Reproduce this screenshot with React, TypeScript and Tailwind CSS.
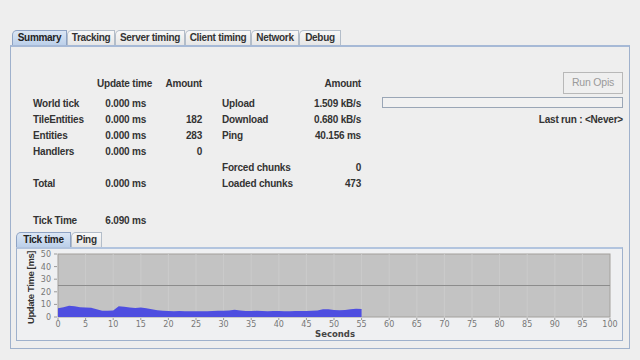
import React from "react";

const FONT = '"Liberation Sans", Arial, sans-serif';

const outerTabs = [
  { label: "Summary", w: "w-[55px]", active: true },
  { label: "Tracking", w: "w-[48px]" },
  { label: "Server timing", w: "w-[70px]" },
  { label: "Client timing", w: "w-[66px]" },
  { label: "Network", w: "w-[48px]" },
  { label: "Debug", w: "w-[42px]" },
];

function Tab({ label, w, active }: { label: string; w: string; active?: boolean }) {
  return (
    <div
      className={`${w} h-[15px] flex items-center justify-center whitespace-nowrap rounded-tl-[5px] border border-b-0 text-[10px] font-bold tracking-[-0.3px] leading-none ${
        active
          ? "border-[#8ea3c4] bg-gradient-to-b from-[#dbe6f4] to-[#bcd0ea] text-[#222]"
          : "border-[#b3bdc9] bg-gradient-to-b from-[#f8f8f8] to-[#e6e6e6] text-[#333]"
      }`}
    >
      {label}
    </div>
  );
}

const cpuRows = [
  ["World tick", "0.000 ms", ""],
  ["TileEntities", "0.000 ms", "182"],
  ["Entities", "0.000 ms", "283"],
  ["Handlers", "0.000 ms", "0"],
  ["", "", ""],
  ["Total", "0.000 ms", ""],
];

const netRows = [
  ["Upload", "1.509 kB/s"],
  ["Download", "0.680 kB/s"],
  ["Ping", "40.156 ms"],
  ["", ""],
  ["Forced chunks", "0"],
  ["Loaded chunks", "473"],
];

// tick time samples (ms), one per second
const samples = [
  7, 7.8, 9, 8.6, 7.8, 7.5, 7.4, 6.2, 5, 5, 5.1, 8.6, 8.1, 7.6, 7.2, 7.6, 7, 6.1, 5.4, 5, 4.7,
  4.6, 4.8, 4.5, 4.6, 4.5, 4.6, 4.5, 4.7, 4.9, 5, 5.2, 5.8, 5.1, 4.8, 4.8, 4.9, 4.7, 4.6, 4.7,
  4.8, 4.6, 4.5, 4.7, 4.8, 4.8, 5, 5.2, 6.1, 6.2, 5.5, 5.3, 5.6, 6.2, 6.6, 6.4,
];

function TickChart() {
  const x0 = 41;
  const x1 = 593;
  const y0 = 5;
  const y1 = 68;
  const sx = (s: number) => x0 + ((x1 - x0) * s) / 100;
  const sy = (v: number) => y1 - ((y1 - y0) * v) / 50;
  const pts = samples.map((v, i) => `${sx(i)},${sy(v)}`).join(" ");
  const area = `${sx(0)},${y1} ${pts} ${sx(55)},${y1}`;
  const xs = Array.from({ length: 21 }, (_, i) => i * 5);
  const ys = [0, 10, 20, 30, 40, 50];
  return (
    <svg width="605" height="92" className="block">
      <rect x={x0} y={y0} width={x1 - x0} height={y1 - y0} fill="#c3c3c3" stroke="#a3a09c" />
      {xs.slice(1, -1).map((s) => (
        <line key={s} x1={sx(s)} x2={sx(s)} y1={y0} y2={y1} stroke="#cbcbcb" strokeWidth="1" />
      ))}
      <line x1={x0} x2={x1} y1={sy(25)} y2={sy(25)} stroke="#8c8c8c" />
      <polygon points={area} fill="#4e4ee0" />
      {ys.map((v) => (
        <g key={v}>
          <line x1={x0 - 4} x2={x0 - 1} y1={sy(v)} y2={sy(v)} stroke="#999" />
          <text
            x={x0 - 7}
            y={sy(v) + 3}
            textAnchor="end"
            fontSize="8"
            fill="#777"
            fontFamily="DejaVu Sans, sans-serif"
          >
            {v}
          </text>
        </g>
      ))}
      {xs.map((s) => (
        <g key={s}>
          <line x1={sx(s)} x2={sx(s)} y1={y1 + 1} y2={y1 + 3} stroke="#999" />
          <text
            x={sx(s)}
            y={y1 + 10}
            textAnchor="middle"
            fontSize="8"
            fill="#777"
            fontFamily="DejaVu Sans, sans-serif"
          >
            {s}
          </text>
        </g>
      ))}
      <text
        x={sx(50) + 1}
        y={y1 + 20}
        textAnchor="middle"
        fontSize="8.5"
        fontWeight="bold"
        fill="#444"
        fontFamily="DejaVu Sans, sans-serif"
      >
        Seconds
      </text>
      <text
        transform={`translate(17 ${(y0 + y1) / 2 + 2}) rotate(-90)`}
        textAnchor="middle"
        fontSize="9.5"
        fontWeight="bold"
        fill="#333"
        fontFamily={FONT}
        letterSpacing="-0.4"
      >
        Update Time [ms]
      </text>
    </svg>
  );
}

export default function App() {
  return (
    <div className="w-[640px] h-[360px] bg-[#eeeeee] text-[#333] overflow-hidden" style={{ fontFamily: FONT }}>
      <div className="pt-[30px] pl-[10px] pr-[10px]">
        <div className="flex pl-[2px]">
          {outerTabs.map((t) => (
            <Tab key={t.label} {...t} />
          ))}
        </div>
        <div className="h-[304px] border border-[#9fb1cc] border-t-2 border-t-[#a6b9d6] flex flex-col pl-[5px] pr-[6px] pb-[7px]">
          <div className="flex pt-[28px] h-[185px] text-[10px] font-bold tracking-[-0.2px] whitespace-nowrap">
            <div className="pl-[17px]">
              <div className="grid grid-cols-[64px_49px_56px] h-[16px] items-center">
                <span />
                <span className="text-right">Update time</span>
                <span className="text-right">Amount</span>
              </div>
              <div className="h-[4px]" />
              {cpuRows.map(([a, b, c], i) => (
                <div key={i} className="grid grid-cols-[64px_49px_56px] h-[16px] items-center">
                  <span>{a}</span>
                  <span className="text-right">{b}</span>
                  <span className="text-right">{c}</span>
                </div>
              ))}
              <div className="h-[21px]" />
              <div className="grid grid-cols-[64px_49px_56px] h-[16px] items-center">
                <span>Tick Time</span>
                <span className="text-right">6.090 ms</span>
                <span />
              </div>
            </div>
            <div className="ml-[20px]">
              <div className="grid grid-cols-[78px_61px] h-[16px] items-center">
                <span />
                <span className="text-right">Amount</span>
              </div>
              <div className="h-[4px]" />
              {netRows.map(([a, b], i) => (
                <div key={i} className="grid grid-cols-[78px_61px] h-[16px] items-center">
                  <span>{a}</span>
                  <span className="text-right">{b}</span>
                </div>
              ))}
            </div>
            <div className="ml-[21px] flex-1 flex flex-col items-end -mt-[3px]">
              <div className="w-[60px] h-[22px] border border-[#b8b8b8] bg-[#efefef] flex items-center justify-center font-normal text-[10.5px] text-[#9a9a9a]">
                Run Opis
              </div>
              <div className="mt-[3px] w-full h-[11px] border border-[#9aa6b6] bg-[#f1f1f1]" />
              <div className="mt-[4px] h-[14px] flex items-center">Last run : &lt;Never&gt;</div>
            </div>
          </div>
          <div className="flex flex-col mt-[1px]">
            <div className="flex">
              <Tab label="Tick time" w="w-[55px]" active />
              <Tab label="Ping" w="w-[31px]" />
            </div>
            <div className="h-[94px] border border-[#9fb1cc] border-t-2 border-t-[#b2c4de] bg-[#eff0f2]">
              <TickChart />
            </div>
          </div>
        </div>
      </div>
    </div>
  );
}
